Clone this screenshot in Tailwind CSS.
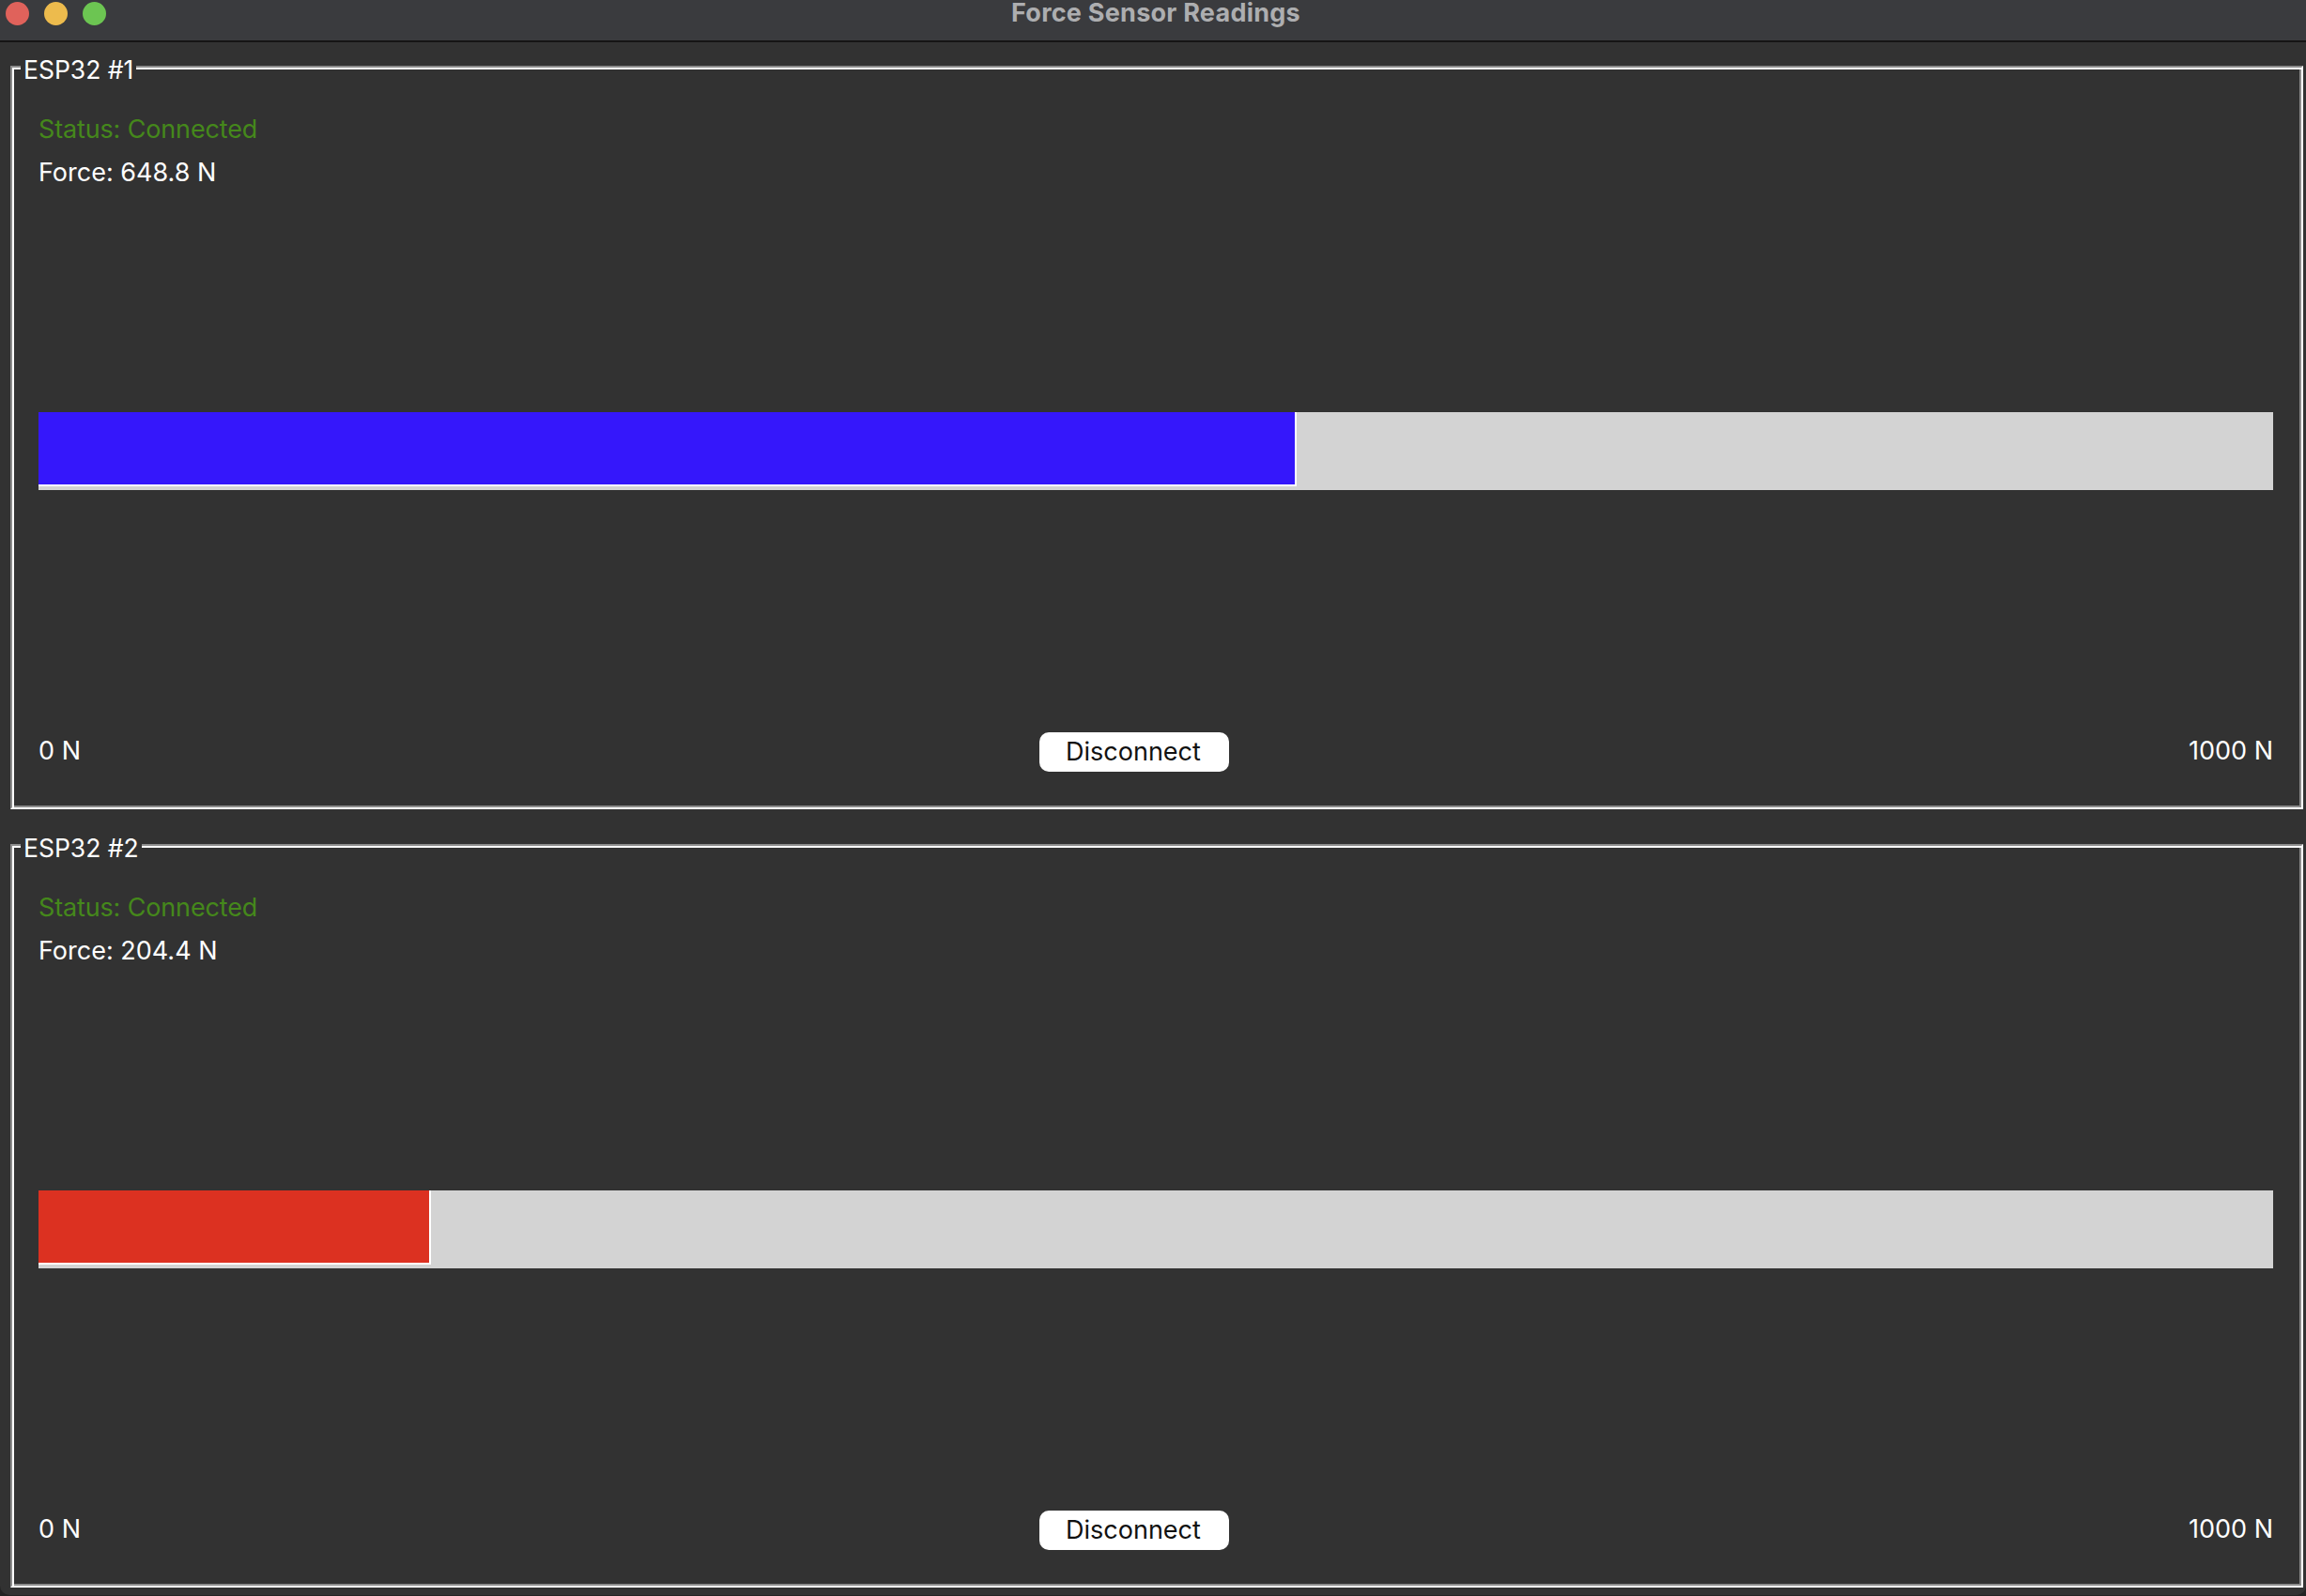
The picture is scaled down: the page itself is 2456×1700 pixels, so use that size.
<!DOCTYPE html>
<html lang="en">
<head>
    <meta charset="UTF-8">
    <title>Force Sensor Readings</title>
    <script src="https://cdn.jsdelivr.net/npm/@tailwindcss/browser@4"></script>
</head>
<body class="bg-[#232323] w-[2456px] h-[1700px] overflow-hidden font-['Inter','Liberation_Sans',sans-serif] text-white text-[27px]">
  <div class="bg-[#323232] h-[1699px] rounded-b-[10px] overflow-hidden">
    <!-- title bar -->
    <header class="relative h-[45px] bg-[#3a3b3e] border-b-2 border-[#151515] flex items-center justify-center">
        <div class="absolute left-[6px] top-[2px] flex gap-[16px]">
            <span class="w-[25px] h-[25px] rounded-full bg-[#e0625b]"></span>
            <span class="w-[25px] h-[25px] rounded-full bg-[#edbb4d]"></span>
            <span class="w-[25px] h-[25px] rounded-full bg-[#6cc552]"></span>
        </div>
        <h1 class="ml-[6px] mb-[15px] text-[27px] leading-[26px] font-bold text-[#adaeb0] tracking-[0.25px]">Force Sensor Readings</h1>
    </header>

    <main class="pl-[11px] pr-[3px] pt-[25px] flex flex-col gap-[37px]">
        <!-- ESP32 #1 -->
        <section class="relative h-[792px] border-2 border-t-[#8c8c8c] border-l-[#8c8c8c] border-r-white border-b-white shadow-[inset_2px_2px_0_#fff,inset_-2px_-2px_0_#8c8c8c] pl-[28px] pr-[30px] pt-[43px] pb-[38px] flex flex-col">
            <span class="absolute left-[9px] -top-[15px] bg-[#323232] px-[3px] leading-[34px] text-[26.5px]">ESP32 #1</span>
            <p class="leading-[46px] text-[#45881b] tracking-[-0.15px]">Status: Connected</p>
            <p class="leading-[46px]">Force: 648.8 N</p>
            <div class="mt-[232px] h-[83px] bg-[#d3d3d3]">
                <div class="w-[1340px] h-[79px] bg-[#3517fb] border-r-2 border-b-2 border-white"></div>
            </div>
            <div class="mt-[258px] flex items-center justify-between">
                <span class="mb-[1px]">0 N</span>
                <button class="w-[202px] h-[42px] pr-[3px] rounded-[10px] bg-white text-[#111]">Disconnect</button>
                <span class="mb-[1px]">1000 N</span>
            </div>
        </section>

        <!-- ESP32 #2 -->
        <section class="relative h-[792px] border-2 border-t-[#8c8c8c] border-l-[#8c8c8c] border-r-white border-b-white shadow-[inset_2px_2px_0_#fff,inset_-2px_-2px_0_#8c8c8c] pl-[28px] pr-[30px] pt-[43px] pb-[38px] flex flex-col">
            <span class="absolute left-[9px] -top-[15px] bg-[#323232] px-[3px] leading-[34px] text-[26.5px]">ESP32 #2</span>
            <p class="leading-[46px] text-[#45881b] tracking-[-0.15px]">Status: Connected</p>
            <p class="leading-[46px]">Force: 204.4 N</p>
            <div class="mt-[232px] h-[83px] bg-[#d3d3d3]">
                <div class="w-[418px] h-[79px] bg-[#dc3121] border-r-2 border-b-2 border-white"></div>
            </div>
            <div class="mt-[258px] flex items-center justify-between">
                <span class="mb-[1px]">0 N</span>
                <button class="w-[202px] h-[42px] pr-[3px] rounded-[10px] bg-white text-[#111]">Disconnect</button>
                <span class="mb-[1px]">1000 N</span>
            </div>
        </section>
    </main>
  </div>
</body>
</html>
